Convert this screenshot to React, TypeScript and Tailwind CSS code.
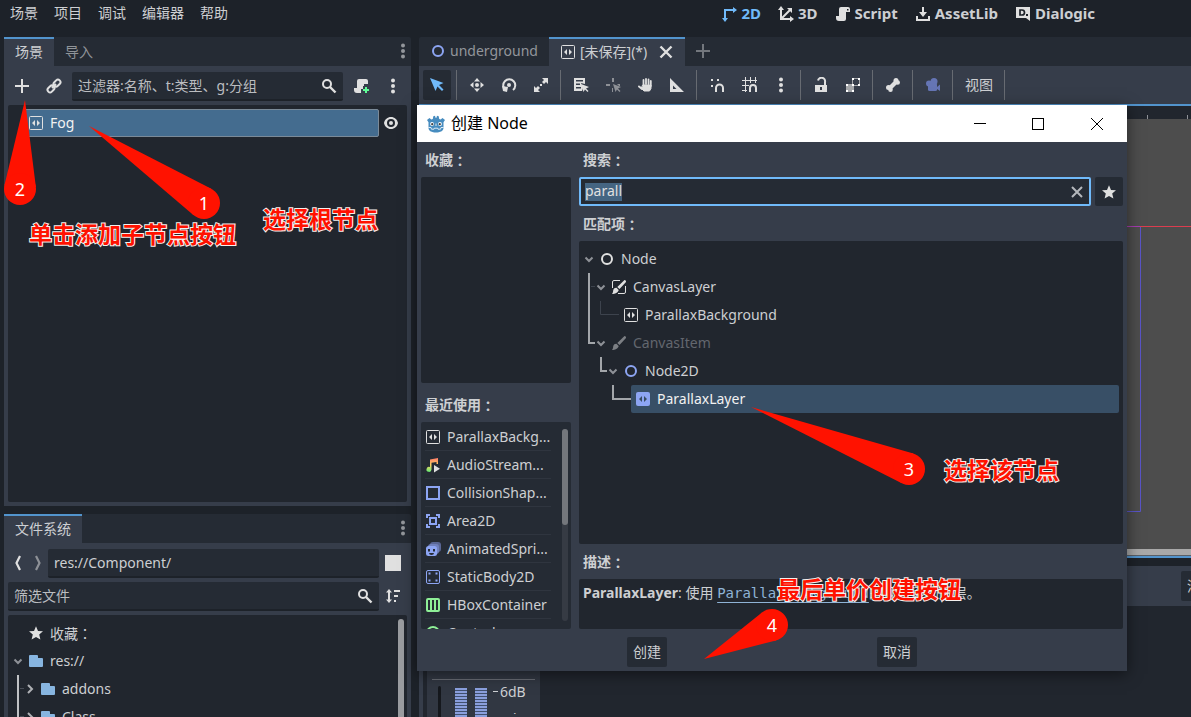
import { useState } from 'react';
import type { ReactNode } from 'react';

const FG = '#e0e0e0';
const BLUE = '#8da5f3';

const icons: Record<string, ReactNode> = {
  add: <path fill={FG} d="M7 1v6H1v2h6v6h2V9h6V7H9V1z" />,
  link: (
    <g fill="none" stroke={FG} strokeWidth="2">
      <rect x="7.2" y="2.6" width="7.6" height="5" rx="2.5" transform="rotate(-45 11 5.1)" />
      <rect x="1.2" y="8.4" width="7.6" height="5" rx="2.5" transform="rotate(-45 5 10.9)" />
      <path d="M6 10l4-4" />
    </g>
  ),
  search: (
    <g fill="none" stroke={FG} strokeWidth="2">
      <circle cx="6" cy="6" r="4" />
      <path d="M9 9l5.5 5.5" strokeWidth="2.4" />
    </g>
  ),
  script: <path fill={FG} d="M6 1a2 2 0 0 0-2 2v7H1v2a3 3 0 0 0 3 3h5a2 2 0 0 0 2-2V6h4V3a2 2 0 0 0-2-2zm6 2h1.5v1.5H12z" />,
  scriptAdd: (
    <g>
      <path fill={FG} d="M6 1a2 2 0 0 0-2 2v7H1v2a3 3 0 0 0 3 3h4v-4h2V8h1V6h4V3a2 2 0 0 0-2-2z" />
      <path fill="#5fff97" d="M12 9h2v2h2v2h-2v2h-2v-2h-2v-2h2z" />
    </g>
  ),
  dots: (
    <g fill={FG}>
      <circle cx="8" cy="2.5" r="2" />
      <circle cx="8" cy="8" r="2" />
      <circle cx="8" cy="13.5" r="2" />
    </g>
  ),
  dotsDim: (
    <g fill="#93969b">
      <circle cx="8" cy="2.5" r="2" />
      <circle cx="8" cy="8" r="2" />
      <circle cx="8" cy="13.5" r="2" />
    </g>
  ),
  parallax: (
    <g>
      <rect x="1.5" y="1.5" width="13" height="13" rx="1" fill="none" stroke={FG} />
      <path fill={FG} d="M7 5L4 8l3 3zM9 5v6l3-3z" />
    </g>
  ),
  parallaxLayer: (
    <g>
      <rect x="1" y="1" width="14" height="14" rx="2" fill={BLUE} />
      <path fill="#384c62" d="M7 5L4 8l3 3zM9 5v6l3-3z" />
    </g>
  ),
  eye: (
    <g>
      <path fill={FG} d="M8 2C4.500 2 1.700 4.500 1 8c.7 3.500 3.500 6 7 6s6.300-2.500 7-6c-.7-3.500-3.500-6-7-6zm0 2a4 4 0 1 1 0 8 4 4 0 0 1 0-8z" />
      <circle cx="8" cy="8" r="2" fill={FG} />
    </g>
  ),
  back: <path d="M10 1L6.500 8l3.500 7" fill="none" stroke={FG} strokeWidth="2.200" />,
  forward: <path d="M6 1l3.500 7L6 15" fill="none" stroke="#8e9197" strokeWidth="2.200" />,
  square: <rect width="16" height="16" fill={FG} />,
  sort: (
    <g fill={FG}>
      <path d="M4 1L1 4.500h2v7H1L4 15l3-3.500H5v-7h2zM9 2h6v2H9zM9 7h4v2H9zM9 12h2v2H9z" />
    </g>
  ),
  star: <path fill={FG} d="M8 1.200l2 4.700 5 .4-3.800 3.300 1.200 5L8 12l-4.400 2.600 1.200-5L1 6.300l5-.4z" />,
  folder: <path fill="#87b5e0" d="M2 2a1 1 0 0 0-1 1v10a1 1 0 0 0 1 1h12a1 1 0 0 0 1-1V6a1 1 0 0 0-1-1h-4V3a1 1 0 0 0-1-1z" />,
  node: <circle cx="8" cy="8" r="5" fill="none" stroke={FG} strokeWidth="2" />,
  node2d: <circle cx="8" cy="8" r="5" fill="none" stroke={BLUE} strokeWidth="2" />,
  canvasLayer: (
    <g>
      <path d="M9 1.500H3A1.500 1.500 0 0 0 1.500 3v6M14.500 7v6a1.500 1.500 0 0 1-1.500 1.500H7" fill="none" stroke={FG} />
      <path fill={FG} d="M13.500 1c.9 0 1.800.8 1.500 2L8.500 10 6.300 8zM5.500 8.800L7.700 11C7 14 4 14.800 1 15c1.200-1.500 1-2.500 1.300-4 .5-1.600 1.800-2.400 3.200-2.200z" />
    </g>
  ),
  canvasItem: <path fill="#7c7f84" d="M13.500 1c.9 0 1.800.8 1.500 2L8.500 10 6.300 8zM5.500 8.800L7.700 11C7 14 4 14.800 1 15c1.200-1.500 1-2.500 1.300-4 .5-1.600 1.800-2.400 3.200-2.200z" />,
  audio: (
    <g>
      <defs>
        <linearGradient id="note" x1="0" y1="0" x2="0" y2="1">
          <stop offset="0" stopColor="#ff7a6b" />
          <stop offset=".5" stopColor="#ffd25e" />
          <stop offset="1" stopColor="#64ec75" />
        </linearGradient>
      </defs>
      <path fill="url(#note)" d="M13 1L5 2.500v7.600A2.500 2.500 0 1 0 6.500 12.500V5.800L11.500 5v2H13z" />
      <path fill={FG} d="M9 8l6 3.800L9 15.500z" />
    </g>
  ),
  collision: <rect x="2" y="2" width="12" height="12" fill="none" stroke={BLUE} strokeWidth="2" />,
  area: (
    <g fill="none" stroke={BLUE} strokeWidth="2">
      <path d="M2 5V2h3M11 2h3v3M14 11v3h-3M5 14H2v-3" />
      <rect x="5" y="5" width="6" height="6" />
    </g>
  ),
  sprite: (
    <g>
      <rect x="5" y="1" width="11" height="10" rx="3" fill="#5a6795" />
      <rect x="3" y="3" width="11" height="10" rx="3" fill="#7081bd" />
      <rect x="1" y="5" width="11" height="10" rx="2.500" fill={BLUE} />
      <path fill="#252b34" d="M3 8h2v2.500H3zM8 8h2v2.500H8zM4 12h5a2.500 2 0 0 1-5 0z" />
    </g>
  ),
  staticBody: (
    <g>
      <rect x="1.500" y="1.500" width="13" height="13" rx="1.500" fill="none" stroke={BLUE} />
      <path fill={BLUE} d="M3.500 3.500h2v2h-2zM10.500 3.500h2v2h-2zM3.500 10.500h2v2h-2zM10.500 10.500h2v2h-2z" />
    </g>
  ),
  hbox: <path fill="#8eef97" fillRule="evenodd" d="M3 1a2 2 0 0 0-2 2v10a2 2 0 0 0 2 2h10a2 2 0 0 0 2-2V3a2 2 0 0 0-2-2zM3 3h2v10H3zM7 3h2v10H7zM11 3h2v10h-2z" />,
  control: <circle cx="8" cy="8" r="6" fill="none" stroke="#8eef97" strokeWidth="2" />,
  mode2d: (
    <g>
      <path d="M4 13V4h9" fill="none" stroke="#70bafa" strokeWidth="2" />
      <path fill="#70bafa" d="M1 12h6l-3 4zM12 1v6l4-3z" />
    </g>
  ),
  mode3d: (
    <g>
      <path d="M3 2v11h10M4 12l8-8" fill="none" stroke={FG} strokeWidth="2" />
      <path fill={FG} d="M0 4l3-4 3 4zM12 10v6l4-3zM9 2h5v5z" />
    </g>
  ),
  asset: <path fill={FG} d="M7 1v5H4l4 5 4-5H9V1zM1 10v5h14v-5h-2v3H3v-3z" />,
  dialogic: (
    <g>
      <path fill={FG} d="M1 1h14v14l-4-3H1z" />
      <path d="M5 4h2a2.500 2.500 0 0 1 0 5H5z" fill="none" stroke="#1d2229" strokeWidth="1.700" />
      <path fill="#1d2229" d="M11 8h2v2h-2z" />
    </g>
  ),
  select: <path fill="#70bafa" d="M1 1l5.500 13 2-4.500L13 14l1.500-1.500-4.500-4.500 4.500-2z" />,
  move: (
    <g fill={FG}>
      <circle cx="8" cy="8" r="2" />
      <path d="M8 1l3 3.500H5zM8 15l3-3.500H5zM1 8l3.500-3v6zM15 8l-3.500-3v6z" />
    </g>
  ),
  rotate: (
    <g>
      <path d="M4.500 13A6 6 0 1 1 12 13" fill="none" stroke={FG} strokeWidth="2" />
      <circle cx="8" cy="8" r="2" fill={FG} />
      <path fill={FG} d="M1 9l6 1-1 5-4-1z" />
    </g>
  ),
  scale: (
    <g fill={FG}>
      <path d="M9 1h6v6l-2-2-2 2-2-2 2-2zM1 9l2 2 2-2 2 2-2 2 2 2H1zM7 7h2v2H7z" />
    </g>
  ),
  listSelect: (
    <g>
      <path fill={FG} fillRule="evenodd" d="M1 1h11v6l-4-1 2 5-1 3H1zM3 3v1.500h7V3zM3 6.500V8h4V6.500zM3 10v1.500h5V10z" />
      <path fill={FG} d="M8 7l2.500 8 1.500-2.500 2.500 2.500 1-1-2.500-2.500L16 10z" />
    </g>
  ),
  pivot: (
    <g fill="#8e9197">
      <path d="M7 1h2v4H7zM1 7h4v2H1zM12 7h3v2h-1zM7 11h1v4H7z" />
      <path d="M8 7l2.500 8 1.500-2.500 2.500 2.500 1-1-2.500-2.500L16 10z" />
    </g>
  ),
  hand: (
    <g fill="none" stroke={FG} strokeLinecap="round">
      <path d="M6.500 8V3M9 7V2M11.500 7V2.500M13.800 9V4" strokeWidth="1.800" />
      <path d="M2 9.500L5 12" strokeWidth="2" />
      <path fill={FG} d="M6 8h8v3.500L12.500 14H7L4.500 11.500z" strokeWidth="1" />
    </g>
  ),
  ruler: <path fill={FG} fillRule="evenodd" d="M1 1v14h14zM4 8.500L7.500 12H4z" />,
  snap: (
    <g>
      <path fill={FG} d="M2 2h2v2H2zM8 2h2v2H8zM2 8h2v2H2z" />
      <path d="M7 15v-4a3.500 3.500 0 0 1 7 0v4" fill="none" stroke={FG} strokeWidth="2" />
    </g>
  ),
  grid: (
    <g fill="none" stroke={FG}>
      <path d="M4.500 0v15M9.500 0v6M14.500 0v6M1 3.500h15M1 8.500h7M1 13.500h5" />
      <path d="M9 15v-4a3 3 0 0 1 6 0v4" strokeWidth="2" />
    </g>
  ),
  lock: (
    <g>
      <path fill={FG} fillRule="evenodd" d="M2 8h12v7H2zM7 10v3h2v-3z" />
      <path d="M5 3.500A3.500 3.500 0 0 1 12 5v3" fill="none" stroke={FG} strokeWidth="2" />
    </g>
  ),
  group: (
    <g>
      <rect x="1" y="7" width="8" height="8" fill="#a5a7aa" />
      <rect x="7.500" y="1.500" width="7" height="7" fill="none" stroke="#a5a7aa" />
      <path fill="#ffffff" d="M7 1h2v2H7zM13 1h2v2h-2zM13 7h2v2h-2zM7 7h2v2H7zM1 7h2v2H1zM1 13h2v2H1zM7 13h2v2H7z" />
    </g>
  ),
  bone: (
    <g fill={FG}>
      <path d="M4 9l5-5 3 3-5 5z" />
      <circle cx="11" cy="3.500" r="2.500" />
      <circle cx="12.700" cy="5.500" r="2.300" />
      <circle cx="3.500" cy="10.500" r="2.500" />
      <circle cx="5.500" cy="12.700" r="2.300" />
    </g>
  ),
  camera: (
    <g fill="#6575b4">
      <circle cx="4" cy="6.500" r="3" />
      <circle cx="9" cy="4.500" r="3.500" />
      <rect x="3" y="6" width="9" height="8" rx="1.500" />
      <path d="M12 10l3-2.500v6.500l-3-2z" />
    </g>
  ),
  close: <path d="M2.500 2.500l11 11M13.500 2.500l-11 11" fill="none" stroke={FG} strokeWidth="2.400" />,
  clear: <path d="M3 3l10 10M13 3L3 13" fill="none" stroke="#b4b7bb" strokeWidth="2" />,
  addDim: <path fill="#73777d" d="M7 1v6H1v2h6v6h2V9h6V7H9V1z" />,
  down: <path d="M4.500 6.500L8 10l3.500-3.500" fill="none" stroke="#8e9197" strokeWidth="2" />,
  right: <path d="M6 4l4 4-4 4" fill="none" stroke="#b0b2b6" strokeWidth="2" />,
};

const Icon = ({ name }: { name: string }) => (
  <svg viewBox="0 0 16 16" className="w-4 h-4 shrink-0" aria-hidden="true">
    {icons[name]}
  </svg>
);

const IconButton = ({ name, label, className = '' }: { name: string; label: string; className?: string }) => (
  <button aria-label={label} className={`w-7 flex items-center justify-center shrink-0 rounded-xs ${className}`}>
    <Icon name={name} />
  </button>
);

const Separator = () => <div className="w-1 pl-px shrink-0"><div className="w-px h-full bg-[#676b72]" /></div>;

// Full-width colon, centred in its box
const Colon = () => <span className="font-['Noto_Sans_CJK_JP',sans-serif]">：</span>;

const indents = ['pl-1', 'pl-4', 'pl-7', 'pl-10'];

interface TreeRowProps {
  depth: number;
  icon: string;
  arrow?: string;
  children: ReactNode;
  className?: string;
}

const TreeRow = ({ depth, icon, arrow, children, className = '' }: TreeRowProps) => (
  <div className={`flex h-7 ${indents[depth]}`}>
    <span className="w-3 flex items-center justify-center shrink-0">{arrow && <Icon name={arrow} />}</span>
    <div className={`flex-1 min-w-0 flex items-center gap-1.5 pl-1 rounded-xs ${className}`}>
      <Icon name={icon} />
      <span className="whitespace-nowrap">{children}</span>
    </div>
  </div>
);

const menus = ['场景', '项目', '调试', '编辑器', '帮助'];

const modes = [
  { icon: 'mode2d', label: '2D' },
  { icon: 'mode3d', label: '3D' },
  { icon: 'script', label: 'Script' },
  { icon: 'asset', label: 'AssetLib' },
  { icon: 'dialogic', label: 'Dialogic' },
];

const tools = [
  ['move', 'rotate', 'scale'],
  ['listSelect', 'pivot', 'hand', 'ruler'],
  ['snap', 'grid', 'dots'],
  ['lock', 'group'],
  ['bone'],
  ['camera'],
];

const recent = [
  { icon: 'parallax', label: 'ParallaxBackg...' },
  { icon: 'audio', label: 'AudioStream...' },
  { icon: 'collision', label: 'CollisionShap...' },
  { icon: 'area', label: 'Area2D' },
  { icon: 'sprite', label: 'AnimatedSpri...' },
  { icon: 'staticBody', label: 'StaticBody2D' },
  { icon: 'hbox', label: 'HBoxContainer' },
  { icon: 'control', label: 'Control' },
];

const MenuBar = () => (
  <header className="h-[37px] shrink-0 flex items-start justify-between pl-0.5 pr-[88px]">
    <nav className="flex h-[26px]">
      {menus.map((m) => (
        <button key={m} className="px-2">{m}</button>
      ))}
    </nav>
    <div className="flex gap-px h-7 font-bold text-[15px]">
      {modes.map((m, i) => (
        <button key={m.label} className={`flex items-center gap-1 px-2 ${i === 0 ? 'text-[#70bafa]' : ''}`}>
          <Icon name={m.icon} />
          {m.label}
        </button>
      ))}
    </div>
  </header>
);

const activeTab = 'border-t-2 border-[#5294cd] bg-[#363d4a] pb-0.5';

const SceneDock = () => (
  <section className="flex-1 min-h-0 flex flex-col">
    <div className="h-[29px] shrink-0 flex bg-[#252b34] rounded-t-xs">
      <button className={`px-[11px] ${activeTab}`}>场景</button>
      <button className="px-[11px] text-[#909499]">导入</button>
      <button aria-label="更多" className="ml-auto pb-0.5"><Icon name="dotsDim" /></button>
    </div>
    <div className="flex-1 min-h-0 flex flex-col gap-1 px-1 pt-1.5 pb-1 bg-[#363d4a]">
      <div className="flex gap-1 h-[29px] shrink-0">
        <IconButton name="add" label="添加子节点" className="pb-px" />
        <IconButton name="link" label="实例化场景" className="pb-px" />
        <div className="flex-1 flex items-center bg-[#252b34] border-b-2 border-[#1d2229] rounded-xs pl-1.5 pr-1.5">
          <input aria-label="过滤节点" placeholder="过滤器:名称、t:类型、g:分组" className="flex-1 min-w-0 outline-none placeholder:text-[#bbbdc0]" />
          <Icon name="search" />
        </div>
        <IconButton name="scriptAdd" label="附加脚本" className="pb-px" />
        <IconButton name="dots" label="更多选项" className="pb-px" />
      </div>
      <div className="flex-1 bg-[#21262e] rounded-xs py-1 pr-0.5 flex items-start">
        <div className="flex-1">
          <TreeRow depth={0} icon="parallax" className="bg-[#446c8f] border border-[#7b8a98] text-[#f2f2f2] -ml-px">Fog</TreeRow>
        </div>
        <IconButton name="eye" label="可见性" className="h-7 -ml-0.5" />
      </div>
    </div>
  </section>
);

const FileDock = () => (
  <section className="h-[203px] shrink-0 flex flex-col overflow-hidden">
    <div className="h-[29px] shrink-0 flex bg-[#252b34] rounded-t-xs">
      <button className={`px-[11px] ${activeTab}`}>文件系统</button>
      <button aria-label="更多" className="ml-auto pb-0.5"><Icon name="dotsDim" /></button>
    </div>
    <div className="flex-1 min-h-0 flex flex-col gap-1 px-1 pt-1.5 bg-[#363d4a]">
      <div className="flex h-[29px] shrink-0">
        <button aria-label="后退" className="w-5 pb-px flex items-center justify-center"><Icon name="back" /></button>
        <button aria-label="前进" className="w-5 pb-px flex items-center justify-center"><Icon name="forward" /></button>
        <input aria-label="路径" defaultValue="res://Component/" className="flex-1 min-w-0 px-1.5 bg-[#252b34] border-b-2 border-[#1d2229] rounded-xs outline-none" />
        <IconButton name="square" label="切换拆分模式" className="pb-px" />
      </div>
      <div className="flex h-[29px] shrink-0">
        <div className="flex-1 flex items-center bg-[#252b34] border-b-2 border-[#1d2229] rounded-xs px-1.5">
          <input aria-label="筛选文件" placeholder="筛选文件" className="flex-1 min-w-0 outline-none placeholder:text-[#bbbdc0]" />
          <Icon name="search" />
        </div>
        <IconButton name="sort" label="排序" className="pb-px" />
      </div>
      <div className="relative flex-1 min-h-0 flex bg-[#21262e] rounded-t-xs pt-1 pr-0.5 overflow-hidden">
        <div className="flex-1">
          <TreeRow depth={0} icon="star">收藏<Colon /></TreeRow>
          <TreeRow depth={0} icon="folder" arrow="down">res://</TreeRow>
          <TreeRow depth={1} icon="folder" arrow="right">addons</TreeRow>
          <TreeRow depth={1} icon="folder" arrow="right">Class</TreeRow>
        </div>
        <div className="w-1.5 mr-px rounded-t-full bg-[#9a9ca0]" />
        <svg className="absolute left-0 top-0 w-10 h-full pointer-events-none" aria-hidden="true">
          <path d="M10 60v60" stroke="#c0c2c5" strokeWidth="2" />
          <path d="M12 73.500h4M12 101.500h4" stroke="#4a4f58" />
        </svg>
      </div>
    </div>
  </section>
);

const meter = 'w-3 mt-0.5 bg-[repeating-linear-gradient(#8a9fdd_0_2px,#41506f_2px_3px)]';

const CanvasEditor = () => (
  <main className="flex-1 min-w-0 flex flex-col">
    <div className="h-[29px] shrink-0 flex bg-[#252b34] rounded-tl-xs">
      <button className="flex items-center gap-1 px-[11px] pb-0.5 text-[#93969b]">
        <Icon name="node2d" />
        underground
      </button>
      <div className={`flex items-center px-[11px] ${activeTab}`}>
        <button className="flex items-center gap-1">
          <Icon name="parallax" />
          [未保存](*)
        </button>
        <button aria-label="关闭" className="ml-[11px]"><Icon name="close" /></button>
      </div>
      <button aria-label="新建场景" className="ml-2.5 pb-0.5"><Icon name="addDim" /></button>
    </div>
    <div className="h-[38px] shrink-0 flex gap-1 p-1 bg-[#363d4a]">
      <IconButton name="select" label="选择模式" className="bg-[#252b34]" />
      {tools.map((group, i) => (
        <div key={i} className="flex gap-1">
          <Separator />
          {group.map((name) => (
            <IconButton key={name} name={name} label={name} />
          ))}
        </div>
      ))}
      <Separator />
      <button className="px-1.5">视图</button>
      <Separator />
    </div>
    <div className="flex-1 min-h-0 flex flex-col border-y-2 border-[#5294cd]">
      <div className="h-[13px] shrink-0 bg-[#21262e]">
        <svg className="w-full h-full" aria-hidden="true">
          <path d="M728.500 9v4M768.500 9v4" stroke="#8e9197" />
        </svg>
      </div>
      <div className="flex-1 min-h-0 bg-[#4d4d4d]">
        <svg className="w-full h-full" aria-hidden="true">
          <path d="M0 107.500h2000" stroke="#dc3d4f" />
          <path d="M0 107.500h721" stroke="#a63db0" />
          <path d="M0 392.500h721.500V108" fill="none" stroke="#5a55c8" />
        </svg>
      </div>
      <div className="h-[7px] shrink-0 bg-[#a9a9a9] border-b border-[#5c6066]" />
    </div>
    <div className="h-[159px] shrink-0 flex flex-col pt-2">
      <div className="h-10 shrink-0 flex justify-end items-center bg-[#363d4a]">
        <button className="w-2.5 h-[30px] pl-1.5 overflow-hidden text-left whitespace-nowrap bg-[#252b34] rounded-l-xs">清除</button>
      </div>
      <div className="flex-1 min-h-0 flex bg-[#21262e] border-l-4 border-[#363d4a]">
        <div className="w-[117px] pl-1 flex items-end">
          <div className="w-full h-[46px] bg-[#313742] px-[5px] pt-2 flex flex-col">
            <div className="border-t border-[#676b72] flex flex-1 pl-1.5 pt-1.5">
              <div className="w-[3px] shrink-0 rounded-t-full bg-[#15181d]" />
              <div className={`ml-3.5 shrink-0 ${meter}`} />
              <div className={`ml-2 shrink-0 ${meter}`} />
              <div className="w-[5px] h-px shrink-0 ml-1.5 mt-[5px] bg-[#cdcfd2]" />
              <div className="h-9 ml-0.5 -mt-2 leading-[27px] overflow-hidden">
                6dB<br />0dB
              </div>
            </div>
          </div>
        </div>
      </div>
    </div>
  </main>
);

const GodotLogo = () => (
  <svg viewBox="0 0 18 18" className="w-[18px] h-[18px] shrink-0" aria-hidden="true">
    <path fill="#478cbf" d="M0 5l2.500-2 1.800 1.500 1.500-.6.500-2.700L8 .8l.5 1.900h1L10 .8l1.700.4.500 2.700 1.500.6L15.500 3 18 5l-1.500 2.200V13c0 3-3.500 4.500-7.500 4.500S1.500 16 1.500 13V7.200z" />
    <circle cx="5" cy="9" r="1.900" fill="#fff" />
    <circle cx="13" cy="9" r="1.900" fill="#fff" />
    <circle cx="5.200" cy="9.200" r="1.100" fill="#414042" />
    <circle cx="12.800" cy="9.200" r="1.100" fill="#414042" />
    <path d="M9 8.500v2.500M1.500 12.500h2.500l.5 1.700h2.500l.3-1h3.400l.3 1h2.500l.5-1.700h2.500" fill="none" stroke="#fff" strokeWidth=".8" />
  </svg>
);

const CreateDialog = () => {
  const [query, setQuery] = useState('parall');

  return (
    <div
      role="dialog"
      aria-label="创建 Node"
      className="absolute left-[417px] right-16 top-[105px] bottom-[46px] flex flex-col bg-[#363d4a] shadow-[0_3px_14px_rgba(0,0,0,0.5)]"
    >
      <div className="h-[37px] shrink-0 flex items-center bg-white text-black text-base pl-2.5">
        <GodotLogo />
        <span className="ml-1.5 pb-0.5">创建 Node</span>
        <div className="ml-auto flex h-full">
          <button aria-label="最小化" className="w-[58px] flex items-center justify-center">
            <svg viewBox="0 0 12 12" className="w-3 h-3"><path d="M0 5.500h12" stroke="#000" /></svg>
          </button>
          <button aria-label="最大化" className="w-[58px] flex items-center justify-center">
            <svg viewBox="0 0 12 12" className="w-3 h-3"><rect x=".5" y=".5" width="11" height="11" fill="none" stroke="#000" /></svg>
          </button>
          <button aria-label="关闭" className="w-[60px] flex items-center justify-center">
            <svg viewBox="0 0 12 12" className="w-3 h-3"><path d="M0 0l12 12M12 0L0 12" stroke="#000" /></svg>
          </button>
        </div>
      </div>

      <div className="flex-1 min-h-0 flex gap-2 px-1">
        <div className="w-[150px] shrink-0 flex flex-col">
          <h2 className="h-[35px] shrink-0 flex items-center pl-1 font-bold">收藏<Colon /></h2>
          <div className="flex-1 rounded-xs bg-[#21262e]" />
          <h2 className="h-[39px] shrink-0 flex items-center pl-1 pt-1 font-bold">最近使用<Colon /></h2>
          <div className="h-[207px] shrink-0 flex pt-px pl-1 pr-[3px] rounded-xs bg-[#252b34] overflow-hidden">
            <ul className="w-[126px]">
              {recent.map((r) => (
                <li key={r.label} className="flex items-center gap-1.5 h-7 border-b border-[#2f353f] whitespace-nowrap">
                  <Icon name={r.icon} />
                  {r.label}
                </li>
              ))}
            </ul>
            <div className="w-1.5 ml-auto mt-1.5 mb-2 rounded-full bg-[#363b44]">
              <div className="h-24 rounded-full bg-[#74777c]" />
            </div>
          </div>
        </div>

        <div className="flex-1 min-w-0 flex flex-col">
          <label htmlFor="search" className="h-[35px] shrink-0 flex items-center pl-1 font-bold">搜索<Colon /></label>
          <div className="flex gap-1 h-[29px] shrink-0">
            <div className="flex-1 flex items-center gap-1 px-1 border-2 border-[#70bafa] rounded-xs bg-[#252b34]">
              <div className="relative flex-1 flex items-center">
                <span className="absolute left-0 h-[18px] bg-[#456582] text-transparent leading-[18px]" aria-hidden="true">{query}</span>
                <input
                  id="search"
                  value={query}
                  onChange={(e) => setQuery(e.target.value)}
                  className="relative w-full pb-px outline-none text-[#e0e0e0]"
                />
              </div>
              <button aria-label="清除" onClick={() => setQuery('')}><Icon name="clear" /></button>
            </div>
            <IconButton name="star" label="收藏" className="bg-[#252b34]" />
          </div>
          <h2 className="h-[35px] shrink-0 flex items-center pl-1 font-bold">匹配项<Colon /></h2>
          <div className="relative flex-1 min-h-0 py-1 pr-1 rounded-xs bg-[#21262e]">
            <svg className="absolute left-0 top-0 w-20 h-full pointer-events-none" fill="none" aria-hidden="true">
              <path d="M12 45.500h4M21.500 60v13.500H40" stroke="#3d434d" />
              <path d="M10 32v70h6M22 116v14h6M34 144v14h18" stroke="#a3a6aa" strokeWidth="2" />
            </svg>
            <TreeRow depth={0} icon="node" arrow="down">Node</TreeRow>
            <TreeRow depth={1} icon="canvasLayer" arrow="down">CanvasLayer</TreeRow>
            <TreeRow depth={2} icon="parallax">ParallaxBackground</TreeRow>
            <TreeRow depth={1} icon="canvasItem" arrow="down" className="text-[#63676e]">CanvasItem</TreeRow>
            <TreeRow depth={2} icon="node2d" arrow="down">Node2D</TreeRow>
            <TreeRow depth={3} icon="parallaxLayer" className="bg-[#384f66] text-[#f2f2f2]">ParallaxLayer</TreeRow>
          </div>
          <h2 className="h-[35px] shrink-0 flex items-center pl-1 font-bold">描述<Colon /></h2>
          <p className="h-[50px] shrink-0 pl-1 pt-1 leading-5 rounded-xs bg-[#21262e]">
            <b>ParallaxLayer</b>: 使用{' '}
            <a href="#" className="font-['DejaVu_Sans_Mono',monospace] text-[#8fb3d6] underline underline-offset-4">ParallaxBackground</a>
            的视差滚动图层。
          </p>
        </div>
      </div>

      <div className="shrink-0 flex justify-evenly pt-2 pb-1">
        <button className="w-10 h-[30px] pb-px rounded-xs bg-[#252b34]">创建</button>
        <button className="w-10 h-[30px] pb-px rounded-xs bg-[#252b34]">取消</button>
      </div>
    </div>
  );
};

interface Pin {
  n: number;
  tip: [number, number];
  center: [number, number];
}

const pins: Pin[] = [
  { n: 1, tip: [89, 126], center: [204, 203] },
  { n: 2, tip: [25, 100], center: [20, 189] },
  { n: 3, tip: [751, 407], center: [909, 469] },
  { n: 4, tip: [704, 659], center: [772, 625] },
];

const R = 16;

// Triangle from the tip to the two tangent points on the circle
const tangent = ({ tip, center }: Pin) => {
  const dx = tip[0] - center[0];
  const dy = tip[1] - center[1];
  const base = Math.atan2(dy, dx);
  const a = Math.acos(R / Math.hypot(dx, dy));
  const at = (t: number) => `${center[0] + R * Math.cos(t)},${center[1] + R * Math.sin(t)}`;
  return `${tip[0]},${tip[1]} ${at(base + a)} ${at(base - a)}`;
};

const note =
  'absolute whitespace-nowrap text-[23px] leading-8 font-bold text-[#ff1200] [-webkit-text-stroke:2px_#f4f0ee] [paint-order:stroke_fill]';

const Annotations = () => (
  <div className="absolute inset-0 pointer-events-none">
    <svg className="absolute inset-0 w-full h-full">
      {pins.map((p) => (
        <g key={p.n} fill="#ff1200">
          <polygon points={tangent(p)} />
          <circle cx={p.center[0]} cy={p.center[1]} r={R} />
          <text x={p.center[0]} y={p.center[1] + 7} textAnchor="middle" fontSize="18" fill="#fff">{p.n}</text>
        </g>
      ))}
    </svg>
    <span className={`${note} left-[29px] top-[218px]`}>单击添加子节点按钮</span>
    <span className={`${note} left-[263px] top-[203px]`}>选择根节点</span>
    <span className={`${note} left-[944px] top-[454px]`}>选择该节点</span>
    <span className={`${note} left-[777px] top-[573px]`}>最后单价创建按钮</span>
  </div>
);

export default function App() {
  return (
    <div className="relative h-screen flex flex-col overflow-hidden bg-[#1d2229] text-[#cdcfd2] text-sm font-['Noto_Sans','Noto_Sans_CJK_SC',sans-serif]">
      <MenuBar />
      <div className="flex-1 min-h-0 flex gap-2 pl-1">
        <div className="w-[407px] shrink-0 flex flex-col gap-2">
          <SceneDock />
          <FileDock />
        </div>
        <CanvasEditor />
      </div>
      <CreateDialog />
      <Annotations />
    </div>
  );
}
